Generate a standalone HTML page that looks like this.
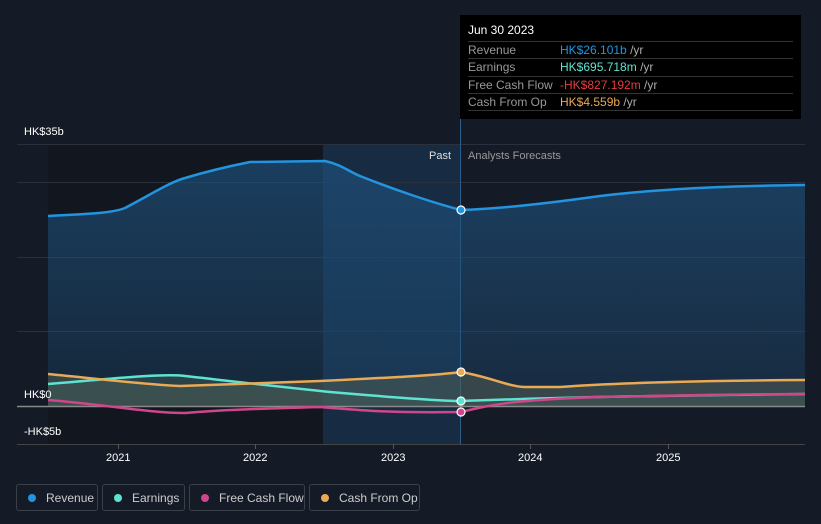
<!DOCTYPE html><html><head><style>
body{margin:0;background:#151b26;font-family:"Liberation Sans",sans-serif;}
.w{position:relative;width:821px;height:524px;overflow:hidden;background:#151b26}
.t{position:absolute;left:460px;top:15px;width:341px;height:104px;background:#000;font-size:12px}
.t .h{position:absolute;left:8px;top:8px;color:#fff;font-size:12px}
.r{position:absolute;left:8px;width:325px;height:17px;border-top:1px solid #333;color:#999;line-height:17px;white-space:nowrap}
.r span{position:absolute;left:92px}
.lg{position:absolute;top:484px;height:27px;border:1px solid #3a404a;border-radius:3px;color:#ccc;font-size:12px;line-height:26px;box-sizing:border-box;white-space:nowrap;overflow:hidden}
.lg i{display:inline-block;width:8px;height:8px;border-radius:50%;margin:0 10px 0 11px}
.ax{position:absolute;color:#fff;font-size:11px}
</style></head><body><div class="w">
<svg width="821" height="524" style="position:absolute;left:0;top:0">
<defs><linearGradient id="g" x1="0" y1="0" x2="0" y2="1"><stop offset="0" stop-color="#1e4f7a" stop-opacity=".7"/><stop offset="1" stop-color="#1e4f7a" stop-opacity=".3"/></linearGradient></defs>
<rect x="48" y="144" width="275" height="300" fill="#12161e"/>
<rect x="323" y="144" width="138" height="300" fill="#172c42"/>
<g stroke="#2a313c" stroke-width="1">
<line x1="17" y1="144.5" x2="805" y2="144.5"/><line x1="17" y1="182.5" x2="805" y2="182.5"/><line x1="17" y1="257.5" x2="805" y2="257.5"/><line x1="17" y1="331.5" x2="805" y2="331.5"/><line x1="17" y1="444.5" x2="805" y2="444.5" stroke="#444"/>
</g>
<line x1="460.5" y1="119" x2="460.5" y2="444" stroke="#2b5f8a"/>
<path d="M48,216 C80,214 110,214 125,208 C150,195 170,182 185,178 C205,172 230,166 250,162 L325,161 C340,164 350,172 360,176 C390,188 430,202 461,210 C500,209 550,203 600,196 C660,189 720,186 805,185 L805,406 L48,406Z" fill="url(#g)"/>
<path d="M48,374 C100,379 150,385 180,386 L320,381 C380,378 430,376 461,372 C490,377 510,387 525,387 L560,387 C600,384 660,381 805,380 L805,406 L48,406Z" fill="#5a6656" opacity=".45"/>
<path d="M48,384 C100,380 160,373 185,376 C230,381 280,387 330,392 C400,398 440,401 461,401 C520,399 600,396 805,394 L805,406 L48,406Z" fill="#3f5a55" opacity=".5"/>
<line x1="17" y1="406.5" x2="805" y2="406.5" stroke="#888" stroke-width="1.5"/>
<g fill="none" stroke-width="2.5">
<path d="M48,216 C80,214 110,214 125,208 C150,195 170,182 185,178 C205,172 230,166 250,162 L325,161 C340,164 350,172 360,176 C390,188 430,202 461,210 C500,209 550,203 600,196 C660,189 720,186 805,185" stroke="#2394df"/>
<path d="M48,384 C100,380 160,373 185,376 C230,381 280,387 330,392 C400,398 440,401 461,401 C520,399 600,396 805,394" stroke="#5fe3d0"/>
<path d="M48,400 C100,404 150,413 185,413 C220,410 250,409 320,407 C360,410 380,413 461,412 C490,405 510,400 600,397 C700,395 760,394 805,394" stroke="#d0468a"/>
<path d="M48,374 C100,379 150,385 180,386 L320,381 C380,378 430,376 461,372 C490,377 510,387 525,387 L560,387 C600,384 660,381 805,380" stroke="#e9a955"/>
</g>
<circle cx="461" cy="210" r="4" fill="#2394df" stroke="#fff" stroke-width="1.2"/>
<circle cx="461" cy="401" r="4" fill="#5fe3d0" stroke="#fff" stroke-width="1.2"/>
<circle cx="461" cy="412" r="4" fill="#d0468a" stroke="#fff" stroke-width="1.2"/>
<circle cx="461" cy="372" r="4" fill="#e9a955" stroke="#fff" stroke-width="1.2"/>
<g stroke="#555"><line x1="118.5" y1="444" x2="118.5" y2="449"/><line x1="255.5" y1="444" x2="255.5" y2="449"/><line x1="393.5" y1="444" x2="393.5" y2="449"/><line x1="530.5" y1="444" x2="530.5" y2="449"/><line x1="668.5" y1="444" x2="668.5" y2="449"/></g>
</svg>
<div class="ax" style="left:24px;top:126px">HK$35b</div>
<div class="ax" style="left:24px;top:389px">HK$0</div>
<div class="ax" style="left:24px;top:426px">-HK$5b</div>
<div class="ax" style="left:106px;top:452px">2021</div>
<div class="ax" style="left:243px;top:452px">2022</div>
<div class="ax" style="left:381px;top:452px">2023</div>
<div class="ax" style="left:518px;top:452px">2024</div>
<div class="ax" style="left:656px;top:452px">2025</div>
<div class="ax" style="left:429px;top:150px;color:#ddd">Past</div>
<div class="ax" style="left:468px;top:150px;color:#999">Analysts Forecasts</div>
<div class="t"><div class="h">Jun 30 2023</div>
<div class="r" style="top:26px">Revenue<span style="color:#2394df">HK$26.101b <b style="font-weight:normal;color:#aaa">/yr</b></span></div>
<div class="r" style="top:43px">Earnings<span style="color:#5fe3d0">HK$695.718m <b style="font-weight:normal;color:#aaa">/yr</b></span></div>
<div class="r" style="top:61px">Free Cash Flow<span style="color:#e63c3c">-HK$827.192m <b style="font-weight:normal;color:#aaa">/yr</b></span></div>
<div class="r" style="top:78px">Cash From Op<span style="color:#e9a955">HK$4.559b <b style="font-weight:normal;color:#aaa">/yr</b></span></div>
<div class="r" style="top:95px;height:0"></div>
</div>
<div class="lg" style="left:16px;width:82px"><i style="background:#2394df"></i>Revenue</div>
<div class="lg" style="left:102px;width:83px"><i style="background:#5fe3d0"></i>Earnings</div>
<div class="lg" style="left:189px;width:116px"><i style="background:#d0468a"></i>Free Cash Flow</div>
<div class="lg" style="left:309px;width:111px"><i style="background:#e9a955"></i>Cash From Op</div>
</div></body></html>
